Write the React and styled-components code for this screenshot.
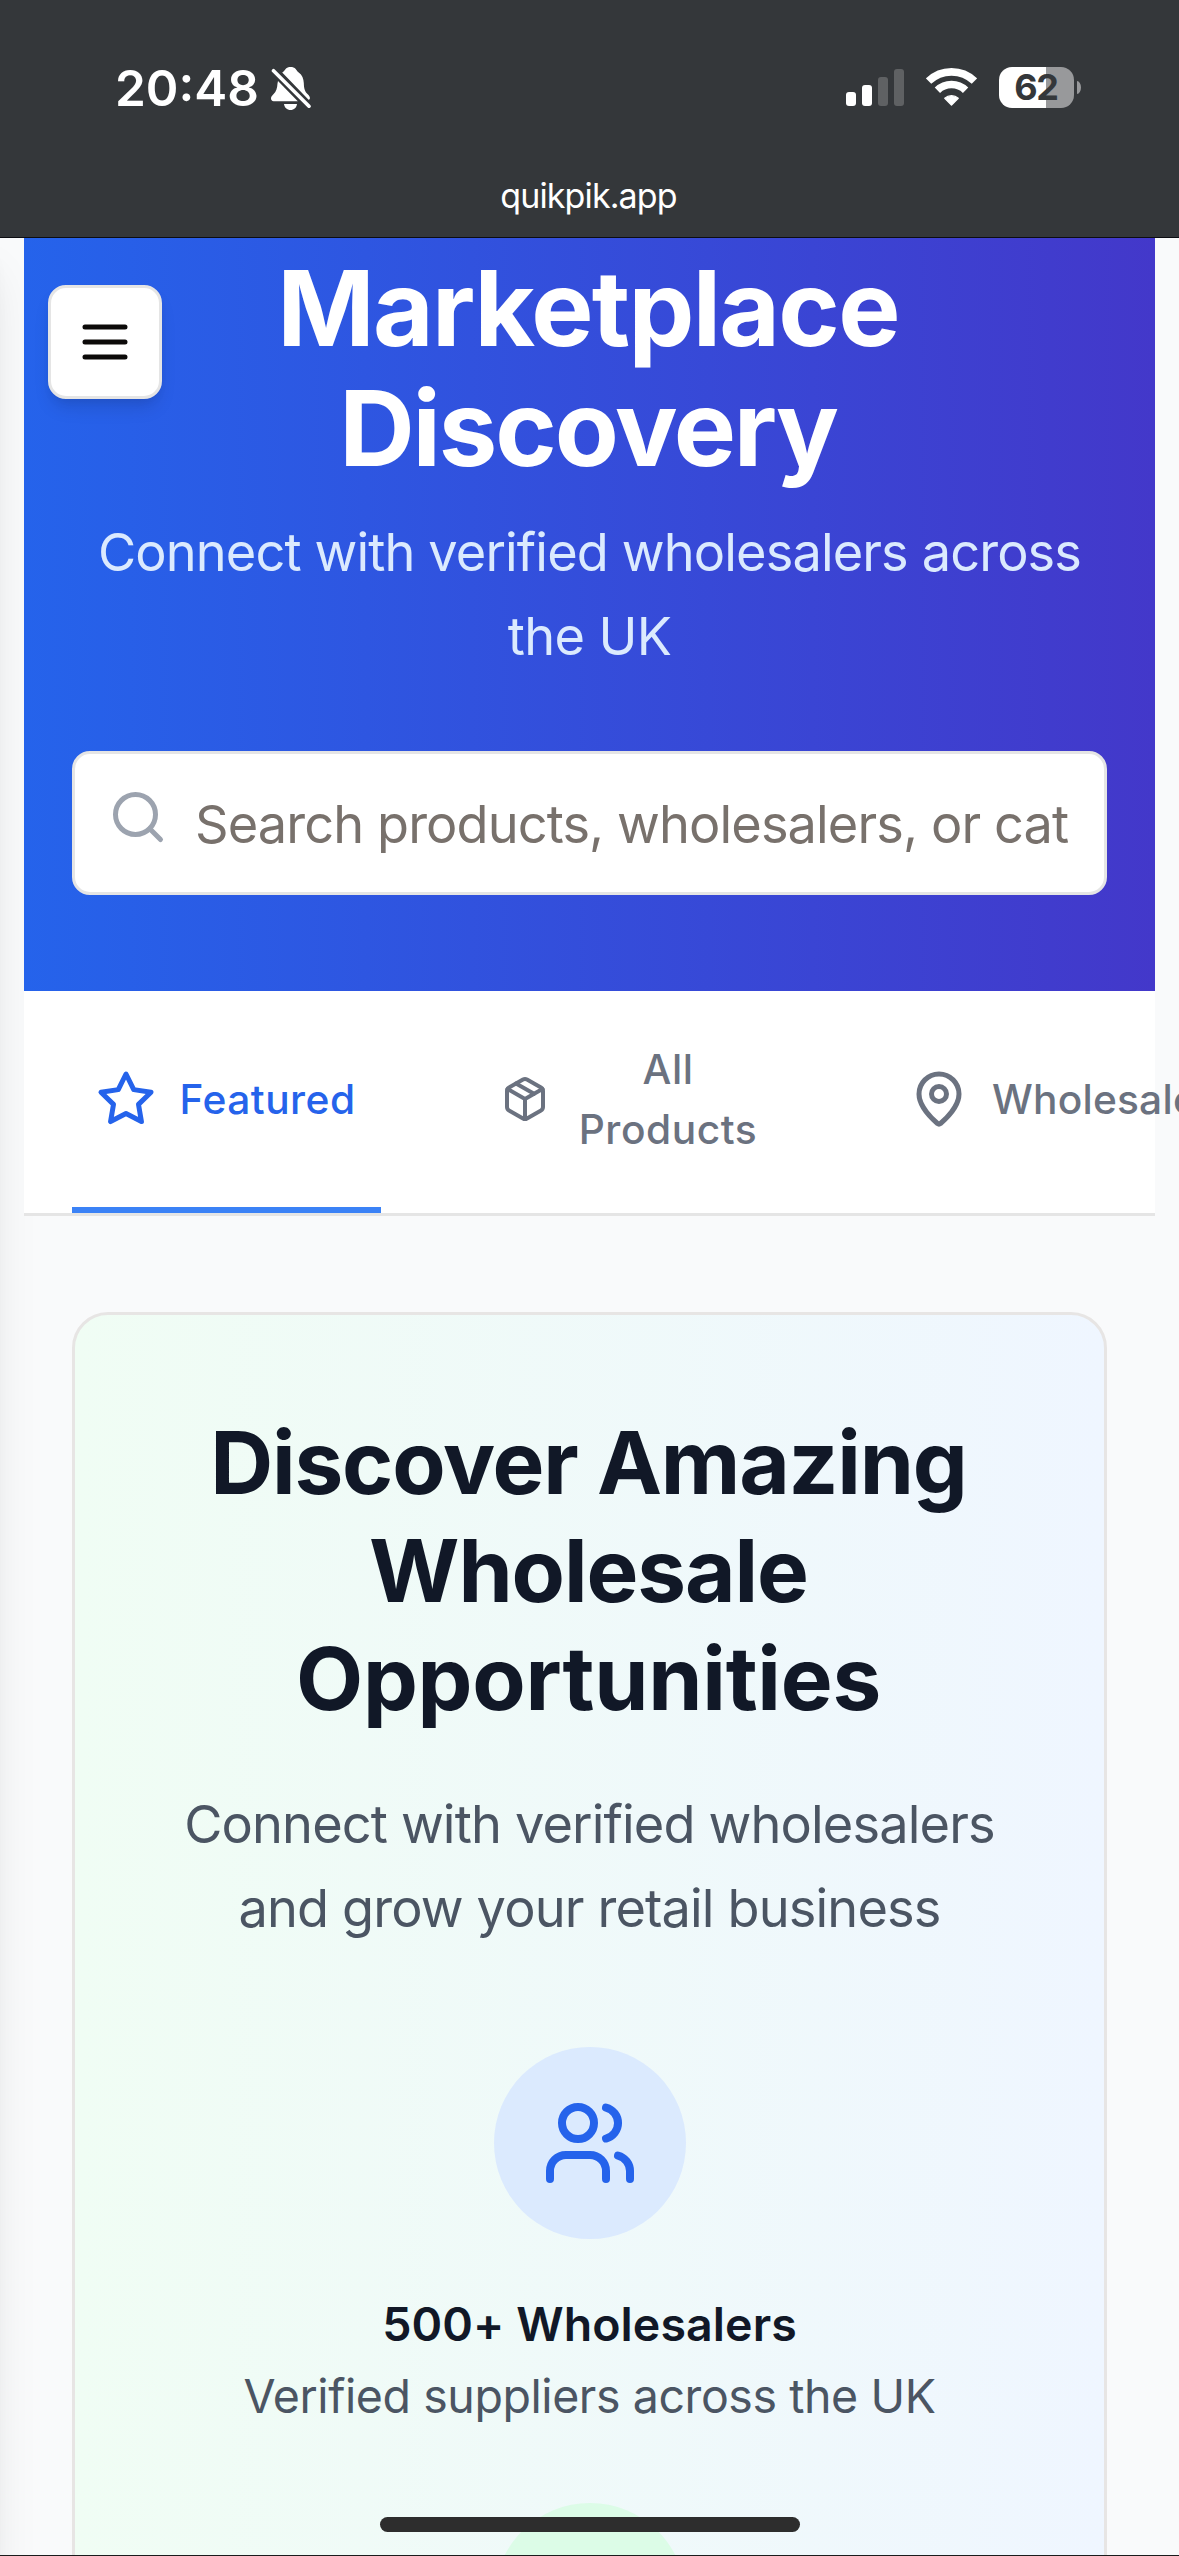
import React from "react";
import styled, { createGlobalStyle } from "styled-components";

const GlobalStyle = createGlobalStyle`
  *, *::before, *::after { box-sizing: border-box; }
  body {
    margin: 0;
    background: #f9fafb;
    font-family: "Inter", "Liberation Sans", sans-serif;
  }
  h1, h2, p { margin: 0; font-weight: inherit; }
`;

const Screen = styled.div`
  position: relative;
  display: flex;
  flex-direction: column;
  width: 1179px;
  height: 2556px;
  overflow: hidden;
  background: #f9fafb;
`;

/* ---------- Browser chrome ---------- */

const Chrome = styled.header`
  position: relative;
  z-index: 2;
  flex: none;
  display: flex;
  flex-direction: column;
  justify-content: space-between;
  height: 238px;
  padding: 58px 98px 20px 115px;
  background: #34373a;
  border-bottom: 1px solid #0c0d12;
  color: #fff;
`;

const StatusBar = styled.div`
  display: flex;
  align-items: flex-start;
  justify-content: space-between;
`;

const ClockGroup = styled.div`
  display: flex;
  align-items: flex-start;
  gap: 12px;
  svg { margin-top: 9px; }
`;

const Clock = styled.span`
  font-size: 49.5px;
  font-weight: 600;
  line-height: 60px;
`;

const SignalGroup = styled.div`
  display: flex;
  align-items: flex-start;
  padding-top: 9px;
`;

const CellBars = styled.div`
  display: flex;
  align-items: flex-end;
  gap: 6px;
  height: 39px;
  margin-right: 22px;
`;

const CellBar = styled.i`
  width: 10px;
  height: ${(p) => p.$height}px;
  border-radius: 3px;
  background: ${(p) => (p.$active ? "#fff" : "#5f6163")};
`;

const Wifi = styled.svg`
  width: 51px;
  height: 39px;
  margin-right: 22px;
`;

const BatteryBody = styled.div`
  display: flex;
  align-items: center;
  justify-content: center;
  width: 75px;
  height: 41px;
  padding-right: 1px;
  border-radius: 13px;
  background: linear-gradient(to right, #fff 47px, #98999b 47px);
  color: #34373a;
  font-size: 36px;
  font-weight: 700;
  letter-spacing: -1.4px;
  line-height: 41px;
`;

const BatteryTip = styled.i`
  width: 4px;
  height: 13px;
  margin: 14px 0 0 3px;
  border-radius: 0 4px 4px 0 / 0 6.5px 6.5px 0;
  background: #98999b;
`;

const Address = styled.div`
  align-self: center;
  padding-right: 19px;
  font-size: 34px;
  letter-spacing: -0.88px;
  line-height: 42px;
`;

/* ---------- Page ---------- */

const OffscreenSidebar = styled.aside`
  position: absolute;
  top: 238px;
  left: -600px;
  width: 600px;
  height: 2600px;
  background: #fff;
  box-shadow: 0 30px 45px -9px rgba(0, 0, 0, 0.1), 0 12px 18px -12px rgba(0, 0, 0, 0.1);
`;

const Page = styled.main`
  position: relative;
  flex: none;
  display: flex;
  flex-direction: column;
  padding: 0 24px;
`;

const MenuButton = styled.button`
  position: absolute;
  top: 47px;
  left: 48px;
  display: flex;
  align-items: center;
  justify-content: center;
  width: 114px;
  height: 114px;
  padding: 0;
  border: 3px solid #e5e5e5;
  border-radius: 18px;
  background: #fff;
  color: #0c0a09;
  box-shadow: 0 12px 18px -3px rgba(0, 0, 0, 0.1), 0 6px 12px -6px rgba(0, 0, 0, 0.1);
`;

const Hero = styled.section`
  display: flex;
  flex-direction: column;
  height: 753px;
  padding: 10px 48px 96px;
  background: linear-gradient(to right, #2563eb, #4338ca);
  text-align: center;
`;

const Line = styled.span`
  display: block;
  white-space: nowrap;
  letter-spacing: ${(p) => p.$track}px;
`;

const HeroTitle = styled.h1`
  padding-right: 3px;
  color: #fff;
  font-size: 104.6px;
  font-weight: 700;
  line-height: 120px;
`;

const HeroText = styled.p`
  margin-top: 22px;
  color: #dbeafe;
  font-size: 52.3px;
  line-height: 84px;
`;

const SearchBox = styled.label`
  display: flex;
  align-items: center;
  height: 144px;
  margin-top: 73px;
  padding: 0 36px 0 33px;
  border: 3px solid #e5e5e5;
  border-radius: 18px;
  background: #fff;
  color: #9ca3af;
  svg { flex: none; margin-top: -12px; }
`;

const SearchInput = styled.input`
  flex: 1;
  min-width: 0;
  height: 84px;
  margin-top: 2px;
  margin-left: 27px;
  padding: 0;
  border: 0;
  outline: 0;
  background: transparent;
  font-family: inherit;
  font-size: 52.3px;
  letter-spacing: -0.89px;
  line-height: 84px;
  &::placeholder { color: #78716c; opacity: 1; }
`;

const TabBar = styled.nav`
  display: flex;
  gap: 96px;
  height: 225px;
  padding: 0 48px;
  border-bottom: 3px solid #e5e5e5;
  background: #fff;
`;

const Tab = styled.div`
  flex: none;
  display: flex;
  align-items: center;
  gap: 24px;
  padding: 0 24px;
  border-bottom: 6px solid ${(p) => (p.$active ? "#3b82f6" : "transparent")};
  color: ${(p) => (p.$active ? "#2563eb" : "#6b7280")};
`;

const TabLabel = styled.span`
  width: ${(p) => p.$width}px;
  margin: 0 1px 0 -1px;
  padding-top: 2px;
  font-size: 40.7px;
  font-weight: 500;
  letter-spacing: ${(p) => p.$track}px;
  line-height: 60px;
  text-align: center;
`;

const Content = styled.div`
  padding: 96px 48px 0;
`;

const Card = styled.section`
  display: flex;
  flex-direction: column;
  align-items: center;
  padding: 94px 72px 96px;
  border: 3px solid #e7e5e4;
  border-radius: 36px;
  background: linear-gradient(to right, #f0fdf4, #eff6ff);
  text-align: center;
`;

const CardTitle = styled.h2`
  padding-right: 2px;
  color: #111827;
  font-size: 87.2px;
  font-weight: 700;
  line-height: 108px;
`;

const CardText = styled.p`
  margin: 49px 0 97px;
  color: #4b5563;
  font-size: 52.3px;
  line-height: 84px;
`;

const FeatureList = styled.div`
  display: flex;
  flex-direction: column;
  gap: 71px;
`;

const Feature = styled.div`
  display: flex;
  flex-direction: column;
  align-items: center;
  font-size: 46.5px;
  line-height: 72px;
`;

const Badge = styled.div`
  display: flex;
  align-items: center;
  justify-content: center;
  width: 192px;
  height: 192px;
  padding-left: 1px;
  border-radius: 50%;
  background: ${(p) => p.$fill};
  color: ${(p) => p.$ink};
`;

const FeatureName = styled.p`
  margin-top: 49px;
  color: #111827;
  font-weight: 600;
  letter-spacing: 0.08px;
`;

const FeatureText = styled.p`
  color: #4b5563;
  letter-spacing: -0.42px;
`;

const HomeIndicator = styled.div`
  position: absolute;
  z-index: 3;
  bottom: 24px;
  left: 380px;
  width: 420px;
  height: 15px;
  border-radius: 8px;
  background: #2d2d2d;
`;

const BottomEdge = styled.div`
  position: absolute;
  z-index: 3;
  bottom: 0;
  left: 0;
  width: 100%;
  height: 1px;
  background: #1b1c1d;
`;

/* ---------- Icons ---------- */

const Stroke = ({ size, children }) => (
  <svg
    width={size}
    height={size}
    viewBox="0 0 24 24"
    fill="none"
    stroke="currentColor"
    strokeWidth="2"
    strokeLinecap="round"
    strokeLinejoin="round"
  >
    {children}
  </svg>
);

const MenuIcon = () => (
  <Stroke size={60}>
    <path d="M4 6h16M4 12h16M4 18h16" />
  </Stroke>
);

const SearchIcon = () => (
  <Stroke size={60}>
    <circle cx="11" cy="11" r="8" />
    <path d="m21 21-4.3-4.3" />
  </Stroke>
);

const StarIcon = () => (
  <Stroke size={60}>
    <polygon points="12 2 15.09 8.26 22 9.27 17 14.14 18.18 21.02 12 17.77 5.82 21.02 7 14.14 2 9.27 8.91 8.26 12 2" />
  </Stroke>
);

const PackageIcon = () => (
  <Stroke size={48}>
    <path d="m7.5 4.27 9 5.15" />
    <path d="M21 8a2 2 0 0 0-1-1.73l-7-4a2 2 0 0 0-2 0l-7 4A2 2 0 0 0 3 8v8a2 2 0 0 0 1 1.73l7 4a2 2 0 0 0 2 0l7-4A2 2 0 0 0 21 16Z" />
    <path d="m3.3 7 8.7 5 8.7-5" />
    <path d="M12 22V12" />
  </Stroke>
);

const PinIcon = () => (
  <Stroke size={60}>
    <path d="M20 10c0 4.993-5.539 10.193-7.399 11.799a1 1 0 0 1-1.202 0C9.539 20.193 4 14.993 4 10a8 8 0 0 1 16 0" />
    <circle cx="12" cy="10" r="3" />
  </Stroke>
);

const UsersIcon = () => (
  <Stroke size={96}>
    <path d="M16 21v-2a4 4 0 0 0-4-4H6a4 4 0 0 0-4 4v2" />
    <circle cx="9" cy="7" r="4" />
    <path d="M22 21v-2a4 4 0 0 0-3-3.87" />
    <path d="M16 3.13a4 4 0 0 1 0 7.75" />
  </Stroke>
);

const BellOffIcon = () => (
  <svg width="40" height="43" viewBox="0 0 40 43">
    <g fill="#fff">
      <path d="M11.2 5.6 C13 4.6 13.6 3.2 14.6 2 C16 .5 17.5 0 19.5 0 C21.700 0 23.400 .6 24.700 2 C25.700 3.200 26.300 4.500 27.700 5.400 C31.200 7.800 32.600 11.500 32.800 16 C33 21.500 33.700 24.400 36.500 27 C38.500 28.900 39.100 30 38.900 31.600 C38.700 32.600 38 33.100 37.300 32.500 Z" />
      <path d="M7 14 L26.800 34.200 H2.600 C.9 34.200 0 33.100 0 31.600 C0 29.900 1 28.700 2.600 27.100 C5.300 24.300 6.200 21.400 6.500 16.500 Z" />
      <path d="M13 37 H26 C25.700 40.400 23 43 19.500 43 C16 43 13.300 40.400 13 37 Z" />
    </g>
    <path d="M2.500 3.700 38 39.200" stroke="#fff" strokeWidth="3.600" strokeLinecap="round" />
  </svg>
);

const WifiIcon = () => (
  <Wifi viewBox="0 0 51 39">
    <g fill="none" stroke="#fff" strokeWidth="7.6">
      <path d="M2.600 14.100 A33 33 0 0 1 48.400 14.100" />
      <path d="M11.400 23.200 A20.200 20.200 0 0 1 39.600 23.200" />
    </g>
    <path
      d="M18.800 31.300 A9.800 9.800 0 0 1 32.200 31.300 L25.500 38 Z"
      fill="#fff"
      stroke="#fff"
      strokeWidth="1.400"
      strokeLinejoin="round"
    />
  </Wifi>
);

const bars = [
  { height: 14, active: true },
  { height: 21, active: true },
  { height: 29, active: false },
  { height: 37, active: false },
];

export default function App() {
  return (
    <Screen>
      <GlobalStyle />
      <OffscreenSidebar />
      <Chrome>
        <StatusBar>
          <ClockGroup>
            <Clock>20:48</Clock>
            <BellOffIcon />
          </ClockGroup>
          <SignalGroup>
            <CellBars>
              {bars.map((bar) => (
                <CellBar key={bar.height} $height={bar.height} $active={bar.active} />
              ))}
            </CellBars>
            <WifiIcon />
            <BatteryBody>62</BatteryBody>
            <BatteryTip />
          </SignalGroup>
        </StatusBar>
        <Address>quikpik.app</Address>
      </Chrome>

      <Page>
        <Hero>
          <HeroTitle>
            <Line $track={-1.69}>Marketplace</Line>
            <Line $track={-2.1}>Discovery</Line>
          </HeroTitle>
          <HeroText>
            <Line $track={-0.87}>Connect with verified wholesalers across</Line>
            <Line $track={-0.63}>the UK</Line>
          </HeroText>
          <SearchBox>
            <SearchIcon />
            <SearchInput placeholder="Search products, wholesalers, or categories..." />
          </SearchBox>
        </Hero>

        <MenuButton aria-label="Menu">
          <MenuIcon />
        </MenuButton>

        <TabBar>
          <Tab $active>
            <StarIcon />
            <TabLabel $width={177} $track={0.5}>Featured</TabLabel>
          </Tab>
          <Tab>
            <PackageIcon />
            <TabLabel $width={192} $track={0.55}>All Products</TabLabel>
          </Tab>
          <Tab>
            <PinIcon />
            <TabLabel $track={0.2}>Wholesalers</TabLabel>
          </Tab>
        </TabBar>

        <Content>
          <Card>
            <CardTitle>
              <Line $track={-1.2}>Discover Amazing</Line>
              <Line $track={-1.11}>Wholesale</Line>
              <Line $track={-0.24}>Opportunities</Line>
            </CardTitle>
            <CardText>
              <Line $track={-0.85}>Connect with verified wholesalers</Line>
              <Line $track={-0.85}>and grow your retail business</Line>
            </CardText>
            <FeatureList>
              <Feature>
                <Badge $fill="#dbeafe" $ink="#2563eb">
                  <UsersIcon />
                </Badge>
                <FeatureName>500+ Wholesalers</FeatureName>
                <FeatureText>Verified suppliers across the UK</FeatureText>
              </Feature>
              <Feature>
                <Badge $fill="#dcfce7" $ink="#16a34a" />
              </Feature>
            </FeatureList>
          </Card>
        </Content>
      </Page>

      <HomeIndicator />
      <BottomEdge />
    </Screen>
  );
}
